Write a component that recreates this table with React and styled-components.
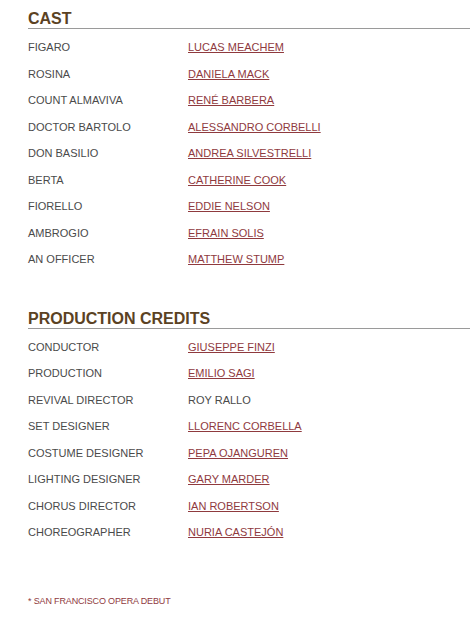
import React from "react";
import styled, { createGlobalStyle } from "styled-components";

const Global = createGlobalStyle`
  html, body { margin: 0; padding: 0; background: #fff; }
  body { font-family: "Liberation Sans", Arial, sans-serif; }
`;

const Page = styled.div`
  padding: 0 0 0 28px;
  width: 470px;
  box-sizing: border-box;
`;

const Section = styled.section`
  margin-bottom: ${(p) => p.$gap || 0}px;
`;

const Heading = styled.h2`
  margin: 0;
  padding-top: 10px;
  font-size: 16px;
  line-height: 18px;
  font-weight: 700;
  color: #5b4223;
  border-bottom: 1px solid #9a9a9a;
`;

const List = styled.div`
  padding-top: 5px;
  display: grid;
  grid-template-columns: 160px 1fr;
  grid-auto-rows: 26.5px;
  align-items: center;
  font-size: 11px;
`;

const Label = styled.div`
  color: #4a4a4a;
`;

const Name = styled.a`
  color: #8f3a3e;
  text-decoration: underline;
`;

const Plain = styled.span`
  color: #4a4a4a;
`;

const Note = styled.p`
  margin: 0;
  font-size: 9px;
  letter-spacing: -0.15px;
  color: #8f3a3e;
`;

const cast = [
  ["FIGARO", "LUCAS MEACHEM"],
  ["ROSINA", "DANIELA MACK"],
  ["COUNT ALMAVIVA", "RENÉ BARBERA"],
  ["DOCTOR BARTOLO", "ALESSANDRO CORBELLI"],
  ["DON BASILIO", "ANDREA SILVESTRELLI"],
  ["BERTA", "CATHERINE COOK"],
  ["FIORELLO", "EDDIE NELSON"],
  ["AMBROGIO", "EFRAIN SOLIS"],
  ["AN OFFICER", "MATTHEW STUMP"],
];

const credits = [
  ["CONDUCTOR", "GIUSEPPE FINZI"],
  ["PRODUCTION", "EMILIO SAGI"],
  ["REVIVAL DIRECTOR", "ROY RALLO", true],
  ["SET DESIGNER", "LLORENC CORBELLA"],
  ["COSTUME DESIGNER", "PEPA OJANGUREN"],
  ["LIGHTING DESIGNER", "GARY MARDER"],
  ["CHORUS DIRECTOR", "IAN ROBERTSON"],
  ["CHOREOGRAPHER", "NURIA CASTEJÓN"],
];

const Rows = ({ items }) => (
  <List>
    {items.map(([role, name, plain]) => (
      <React.Fragment key={role}>
        <Label>{role}</Label>
        <div>{plain ? <Plain>{name}</Plain> : <Name href="#">{name}</Name>}</div>
      </React.Fragment>
    ))}
  </List>
);

export default function App() {
  return (
    <Page>
      <Global />
      <Section $gap={27}>
        <Heading>CAST</Heading>
        <Rows items={cast} />
      </Section>
      <Section $gap={50}>
        <Heading>PRODUCTION CREDITS</Heading>
        <Rows items={credits} />
      </Section>
      <Note>* SAN FRANCISCO OPERA DEBUT</Note>
    </Page>
  );
}
